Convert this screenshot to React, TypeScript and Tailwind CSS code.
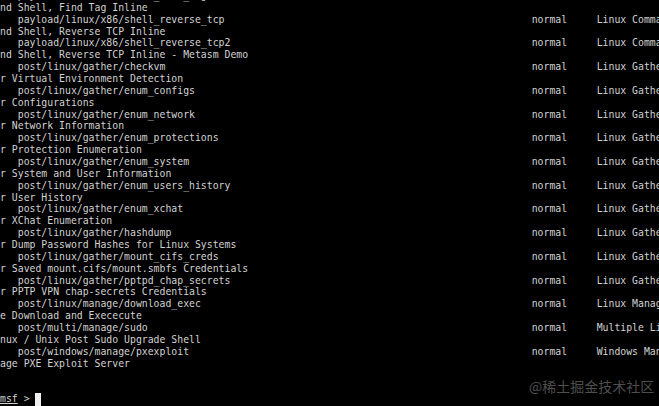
import React from "react";

type Row = { path: string; desc: string } | string;

const rows: Row[] = [
  { path: "payload/linux/x86/shell_find_tag", desc: "Linux Command Shell, Find Tag Inline" },
  "nd Shell, Find Tag Inline",
  { path: "payload/linux/x86/shell_reverse_tcp", desc: "Linux Command Shell, Reverse TCP Inline" },
  "nd Shell, Reverse TCP Inline",
  { path: "payload/linux/x86/shell_reverse_tcp2", desc: "Linux Command Shell, Reverse TCP Inline - Metasm Demo" },
  "nd Shell, Reverse TCP Inline - Metasm Demo",
  { path: "post/linux/gather/checkvm", desc: "Linux Gather Virtual Environment Detection" },
  "r Virtual Environment Detection",
  { path: "post/linux/gather/enum_configs", desc: "Linux Gather Configurations" },
  "r Configurations",
  { path: "post/linux/gather/enum_network", desc: "Linux Gather Network Information" },
  "r Network Information",
  { path: "post/linux/gather/enum_protections", desc: "Linux Gather Protection Enumeration" },
  "r Protection Enumeration",
  { path: "post/linux/gather/enum_system", desc: "Linux Gather System and User Information" },
  "r System and User Information",
  { path: "post/linux/gather/enum_users_history", desc: "Linux Gather User History" },
  "r User History",
  { path: "post/linux/gather/enum_xchat", desc: "Linux Gather XChat Enumeration" },
  "r XChat Enumeration",
  { path: "post/linux/gather/hashdump", desc: "Linux Gather Dump Password Hashes for Linux Systems" },
  "r Dump Password Hashes for Linux Systems",
  { path: "post/linux/gather/mount_cifs_creds", desc: "Linux Gather Saved mount.cifs/mount.smbfs Credentials" },
  "r Saved mount.cifs/mount.smbfs Credentials",
  { path: "post/linux/gather/pptpd_chap_secrets", desc: "Linux Gather PPTP VPN chap-secrets Credentials" },
  "r PPTP VPN chap-secrets Credentials",
  { path: "post/linux/manage/download_exec", desc: "Linux Manage Download and Exececute" },
  "e Download and Exececute",
  { path: "post/multi/manage/sudo", desc: "Multiple Linux / Unix Post Sudo Upgrade Shell" },
  "nux / Unix Post Sudo Upgrade Shell",
  { path: "post/windows/manage/pxexploit", desc: "Windows Manage PXE Exploit Server" },
  "age PXE Exploit Server",
  "",
  "",
];

function fmt(r: Row): string {
  if (typeof r === "string") return r;
  return ("   " + r.path).padEnd(90, " ") + "normal".padEnd(11, " ") + r.desc;
}

export default function App() {
  return (
    <div className="relative w-[659px] h-[406px] overflow-hidden bg-black">
      <div
        className="mt-[-10px] whitespace-pre text-[9.82px] leading-[11.87px] text-[#d2d2d2]"
        style={{ fontFamily: '"DejaVu Sans Mono", "Liberation Mono", monospace' }}
      >
        {rows.map((r, i) => (
          <div key={i} className="h-[11.87px]">
            {fmt(r)}
          </div>
        ))}
        <div className="flex h-[11.87px] items-center">
          <span className="underline">msf</span>
          <span>{" > "}</span>
          <span className="inline-block h-[13px] w-[6px] bg-[#f0f0f0]" />
        </div>
      </div>
      <div
        className="absolute left-[529px] top-[376px] text-[14px] leading-[20px] text-[#4e4e4e]"
        style={{ fontFamily: '"Noto Sans CJK SC", sans-serif' }}
      >
        @稀土掘金技术社区
      </div>
    </div>
  );
}
